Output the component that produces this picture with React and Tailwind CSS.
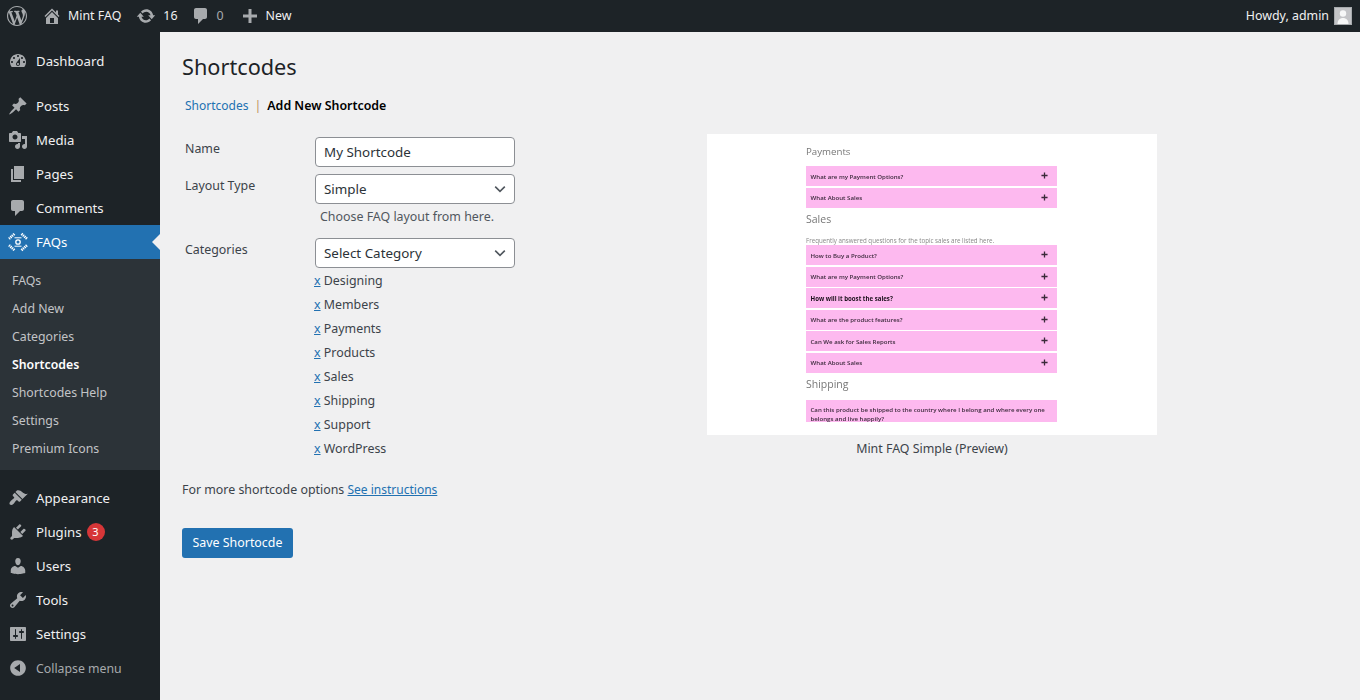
import React from 'react';

const font = { fontFamily: '"Noto Sans", sans-serif' };

const icons = {
  wp: 'M20 10c0-5.51-4.49-10-10-10C4.48 0 0 4.49 0 10c0 5.52 4.48 10 10 10 5.51 0 10-4.48 10-10zM7.78 15.37L4.37 6.22c.55-.02 1.17-.08 1.17-.08.5-.06.44-1.13-.06-1.11 0 0-1.45.11-2.37.11-.18 0-.37 0-.58-.01C4.12 2.69 6.87 1.11 10 1.11c2.33 0 4.45.87 6.05 2.34-.68-.11-1.65.39-1.65 1.58 0 .74.45 1.36.9 2.1.35.61.55 1.36.55 2.46 0 1.49-1.4 5-1.4 5l-3.03-8.37c.54-.02.82-.17.82-.17.5-.05.44-1.25-.06-1.22 0 0-1.44.12-2.38.12-.87 0-2.33-.12-2.33-.12-.5-.03-.56 1.2-.06 1.22l.92.08 1.26 3.41zM17.41 10c.24-.64.74-1.87.43-4.25.7 1.29 1.05 2.71 1.05 4.25 0 3.29-1.73 6.24-4.4 7.78.97-2.59 1.94-5.2 2.92-7.78zM6.1 18.09C3.12 16.65 1.11 13.53 1.11 10c0-1.3.23-2.48.72-3.59C3.25 10.3 4.67 14.2 6.1 18.09zm4.03-6.63l2.58 6.98c-.86.29-1.76.45-2.71.45-.79 0-1.57-.11-2.29-.33.81-2.38 1.62-4.74 2.42-7.1z',
  home: 'M16 8.5l1.53 1.53-1.06 1.06L10 4.62l-6.47 6.47-1.06-1.06L10 2.5l4 4v-2h2v4zm-6-2.46l6 5.99V18H4v-5.97zM12 17v-5H8v5h4z',
  update: 'M10.2 3.28c3.53 0 6.43 2.61 6.92 6h2.08l-3.5 4-3.5-4h2.32c-.45-1.97-2.21-3.45-4.32-3.45-1.45 0-2.73.71-3.54 1.78L4.95 5.66C6.23 4.2 8.11 3.28 10.2 3.28zm-.4 13.44c-3.52 0-6.43-2.61-6.92-6H.8l3.5-4c1.17 1.33 2.33 2.67 3.5 4H5.48c.45 1.97 2.21 3.45 4.32 3.45 1.45 0 2.73-.71 3.54-1.78l1.71 1.95c-1.28 1.46-3.15 2.38-5.25 2.38z',
  comment: 'M5 2h9c1.1 0 2 .9 2 2v7c0 1.1-.9 2-2 2h-2l-5 5v-5H5c-1.1 0-2-.9-2-2V4c0-1.1.9-2 2-2z',
  plus: 'M17 8.5v3h-5.5V17h-3v-5.5H3v-3h5.5V3h3v5.5H17z',
  dashboard: 'M3.76 16h12.48c1.1-1.37 1.76-3.11 1.76-5 0-4.42-3.58-8-8-8s-8 3.58-8 8c0 1.89.66 3.63 1.76 5zM10 4c.55 0 1 .45 1 1s-.45 1-1 1-1-.45-1-1 .45-1 1-1zM6 6c.55 0 1 .45 1 1s-.45 1-1 1-1-.45-1-1 .45-1 1-1zm8 0c.55 0 1 .45 1 1s-.45 1-1 1-1-.45-1-1 .45-1 1-1zm-5.37 5.55L12 7v6c0 1.1-.9 2-2 2s-2-.9-2-2c0-.57.24-1.08.63-1.45zM4 10c.55 0 1 .45 1 1s-.45 1-1 1-1-.45-1-1 .45-1 1-1zm12 0c.55 0 1 .45 1 1s-.45 1-1 1-1-.45-1-1 .45-1 1-1zm-5 3c0-.55-.45-1-1-1s-1 .45-1 1 .45 1 1 1 1-.45 1-1z',
  post: 'M10.44 3.02l1.82-1.82 6.36 6.35-1.83 1.82c-1.05-.68-2.48-.57-3.41.36l-.75.75c-.92.93-1.04 2.35-.35 3.41l-1.83 1.82-2.41-2.41-2.8 2.79c-.42.42-3.38 2.71-3.8 2.29s1.86-3.39 2.28-3.81l2.79-2.79L4.1 9.36l1.83-1.82c1.05.69 2.48.57 3.4-.36l.75-.75c.93-.92 1.05-2.35.36-3.41z',
  media: 'M13 11V4c0-.55-.45-1-1-1h-1.67L9 1H5L3.67 3H2c-.55 0-1 .45-1 1v7c0 .55.45 1 1 1h10c.55 0 1-.45 1-1zM7 4.5c1.38 0 2.5 1.12 2.5 2.5S8.38 9.5 7 9.5 4.5 8.38 4.5 7 5.62 4.5 7 4.5zM14 6h5v10.5c0 1.38-1.12 2.5-2.5 2.5S14 17.88 14 16.5s1.12-2.5 2.5-2.5c.17 0 .34.02.5.05V9h-3V6zm-4 8.05V13h2v3.5c0 1.38-1.12 2.5-2.5 2.5S7 17.88 7 16.5 8.12 14 9.5 14c.17 0 .34.02.5.05z',
  page: 'M6 15V2h10v13H6zm-1 1h8v2H3V5h2v11z',
  appearance: 'M14.48 11.06L7.41 3.99l1.5-1.5c.5-.56 2.3-.47 3.51.32 1.21.8 1.43 1.28 2.91 2.1 1.18.64 2.45 1.26 4.45.85zm-.71.71L6.7 4.7 4.93 6.47c-.39.39-.39 1.02 0 1.41l1.06 1.06c.39.39.39 1.03 0 1.42-.6.6-1.43 1.11-2.21 1.69-.35.26-.7.53-1.01.84-1.35 1.34-1.73 2.76-.82 3.67s2.33.53 3.67-.82c.31-.31.58-.66.84-1.01.58-.78 1.09-1.61 1.69-2.21.39-.39 1.03-.39 1.42 0l1.06 1.06c.39.39 1.02.39 1.41 0z',
  plugins: 'M13.11 4.36L9.87 7.6 8 5.73l3.24-3.24c.35-.34 1.05-.2 1.56.32.52.51.66 1.21.31 1.55zm-8 1.77l.91-1.12 9.01 9.01-1.19.84c-.71.71-2.63 1.16-3.82 1.16H6.14L4.9 17.26c-.59.59-1.54.59-2.12 0-.59-.58-.59-1.53 0-2.12l1.24-1.24v-3.88c0-1.13.4-3.19 1.09-3.89zm7.26 3.97l3.24-3.24c.34-.35 1.04-.21 1.55.31.52.51.66 1.21.31 1.55l-3.24 3.25z',
  users: 'M10 9.25c-2.27 0-2.73-3.44-2.73-3.44C7 4.02 7.82 2 9.97 2c2.16 0 2.98 2.02 2.71 3.81 0 0-.41 3.44-2.68 3.44zm0 2.57L12.72 10c2.39 0 4.52 2.33 4.52 4.53v2.49s-3.65 1.13-7.24 1.13c-3.65 0-7.24-1.13-7.24-1.13v-2.49c0-2.25 1.94-4.48 4.47-4.48z',
  tools: 'M16.68 9.77c-1.34 1.34-3.3 1.67-4.95.99l-5.41 6.52c-.99.99-2.59.99-3.58 0s-.99-2.59 0-3.57l6.52-5.42c-.68-1.65-.35-3.61.99-4.95 1.28-1.28 3.12-1.62 4.72-1.06l-2.89 2.89 2.82 2.82 2.86-2.87c.53 1.58.18 3.39-1.08 4.65zM3.81 16.21c.4.39 1.04.39 1.43 0 .4-.4.4-1.04 0-1.43-.39-.4-1.03-.4-1.43 0-.39.39-.39 1.03 0 1.43z',
  settings: 'M18 16V4c0-.55-.45-1-1-1H3c-.55 0-1 .45-1 1v12c0 .55.45 1 1 1h14c.55 0 1-.45 1-1zM8 11h1c.55 0 1 .45 1 1s-.45 1-1 1H8v1.5c0 .28-.22.5-.5.5s-.5-.22-.5-.5V13H6c-.55 0-1-.45-1-1s.45-1 1-1h1V5.5c0-.28.22-.5.5-.5s.5.22.5.5V11zm5-2h-1c-.55 0-1-.45-1-1s.45-1 1-1h1V5.5c0-.28.22-.5.5-.5s.5.22.5.5V7h1c.55 0 1 .45 1 1s-.45 1-1 1h-1v5.5c0 .28-.22.5-.5.5s-.5-.22-.5-.5V9z',
  collapse: 'M10 2.16c4.33 0 7.84 3.51 7.84 7.84s-3.51 7.84-7.84 7.84S2.16 14.33 2.16 10 5.71 2.16 10 2.16zm2 11.72V6.12L6.18 9.97z',
};

function Dash({ name, className }) {
  return (
    <svg viewBox="0 0 20 20" fill="currentColor" className={className}>
      <path d={icons[name]} />
    </svg>
  );
}

function FaqIcon() {
  return (
    <svg viewBox="0 0 20 20" fill="none" stroke="#fff" className="w-5 h-5">
      <circle cx="10" cy="10" r="2.2" strokeWidth="1.3" />
      <path d="M6.5 5.8h7M6.5 14.2h7" strokeWidth="1" />
      <path d="M1 6.8L6.5 1.8M13.5 1.8L19 6.8M1 13.2l5.5 5M13.5 18.2l5.5-5" strokeWidth="2.6" strokeDasharray="1.3 .7" />
    </svg>
  );
}

const topMenu = [
  { icon: 'post', label: 'Posts' },
  { icon: 'media', label: 'Media' },
  { icon: 'page', label: 'Pages' },
  { icon: 'comment', label: 'Comments' },
];

const bottomMenu = [
  { icon: 'appearance', label: 'Appearance' },
  { icon: 'plugins', label: 'Plugins', badge: 3 },
  { icon: 'users', label: 'Users' },
  { icon: 'tools', label: 'Tools' },
  { icon: 'settings', label: 'Settings' },
];

const submenu = ['FAQs', 'Add New', 'Categories', 'Shortcodes', 'Shortcodes Help', 'Settings', 'Premium Icons'];
const categories = ['Designing', 'Members', 'Payments', 'Products', 'Sales', 'Shipping', 'Support', 'WordPress'];

function MenuItem({ icon, label, badge }) {
  return (
    <div className="h-[34px] flex items-center text-[13.2px] text-[#f0f0f1]">
      <span className="w-9 flex justify-center text-[#a7aaad]">
        <Dash name={icon} className="w-5 h-5" />
      </span>
      <span className="pt-[2px]">{label}</span>
      {badge && (
        <span className="ml-[5px] w-[18px] h-[18px] rounded-full bg-[#d63638] text-white text-[11px] flex items-center justify-center">
          {badge}
        </span>
      )}
    </div>
  );
}

function Sidebar() {
  return (
    <div className="w-40 shrink-0 bg-[#1d2327] pt-3">
      <MenuItem icon="dashboard" label="Dashboard" />
      <div className="h-[11px]" />
      {topMenu.map((m) => (
        <MenuItem key={m.label} {...m} />
      ))}
      <div className="relative h-[34px] flex items-center text-[13.2px] text-white bg-[#2271b1]">
        <span className="w-9 flex justify-center">
          <FaqIcon />
        </span>
        <span className="pt-[2px]">FAQs</span>
        <span className="absolute right-0 top-[9px] border-[8px] border-transparent border-r-[#f0f0f1]" />
      </div>
      <div className="bg-[#2c3338] pt-2 pb-[7px]">
        {submenu.map((s) => (
          <div
            key={s}
            className={`h-7 pl-3 flex items-center text-[12.3px] ${s === 'Shortcodes' ? 'text-white font-semibold' : 'text-[#c3c4c7]'}`}
          >
            {s}
          </div>
        ))}
      </div>
      <div className="h-[11px]" />
      {bottomMenu.map((m) => (
        <MenuItem key={m.label} {...m} />
      ))}
      <div className="h-[34px] flex items-center text-[12.3px] text-[#a7aaad]">
        <span className="w-9 flex justify-center">
          <Dash name="collapse" className="w-5 h-5" />
        </span>
        <span className="pt-[2px]">Collapse menu</span>
      </div>
    </div>
  );
}

function AdminBar() {
  return (
    <div className="h-8 shrink-0 bg-[#1d2327] flex items-center text-[12.4px] text-[#f0f0f1]">
      <span className="w-[34px] flex justify-center text-[#a7aaad]">
        <Dash name="wp" className="w-5 h-5" />
      </span>
      <span className="ml-[8px] flex items-center text-[#a7aaad]">
        <Dash name="home" className="w-5 h-5" />
      </span>
      <span className="ml-[6px]">Mint FAQ</span>
      <Dash name="update" className="w-5 h-5 ml-[15px] text-[#a7aaad]" />
      <span className="ml-[7px]">16</span>
      <Dash name="comment" className="w-5 h-5 ml-[13px] text-[#a7aaad]" />
      <span className="ml-[6px] text-[#a7aaad]">0</span>
      <Dash name="plus" className="w-5 h-5 ml-4 text-[#a7aaad]" />
      <span className="ml-[6px]">New</span>
      <span className="ml-auto">Howdy, admin</span>
      <span className="ml-[5px] mr-2 w-[18px] h-[18px] bg-[#c3c4c7] border border-[#a7aaad] flex items-end justify-center overflow-hidden">
        <svg viewBox="0 0 16 16" fill="#f6f7f7" className="w-4 h-4">
          <circle cx="8" cy="5.5" r="3.2" />
          <path d="M2.5 16c0-4 2.5-6 5.5-6s5.5 2 5.5 6z" />
        </svg>
      </span>
    </div>
  );
}

function FaqRow({ children, bold }) {
  return (
    <div className="h-[20px] mb-[1.5px] bg-[#fdb9ef] flex items-center justify-between pl-[4.5px] pr-[9px] text-[6.1px] text-[#3c2a3c]">
      <span className={bold ? 'pt-px font-bold text-[#1a101a]' : 'pt-px font-semibold'}>{children}</span>
      <svg viewBox="0 0 8 8" className="w-[7px] h-[7px] -mt-px" stroke="#3a2a3a" strokeWidth="1.5">
        <path d="M4 .5v7M.5 4h7" />
      </svg>
    </div>
  );
}

// the preview is a scaled-down picture in the original, hence the tiny type
function Preview() {
  return (
    <div className="flex flex-col items-center">
      <div className="w-[450px] h-[301px] bg-white overflow-hidden pl-[99px] blur-[0.4px]" style={{ fontFamily: '"Open Sans", sans-serif' }}>
        <div className="w-[251px]">
          <div className="h-[32px] pt-[11px] text-[9.7px] leading-[14px] text-[#777]">Payments</div>
          <FaqRow>What are my Payment Options?</FaqRow>
          <FaqRow>What About Sales</FaqRow>
          <div className="h-[17px] text-[10.5px] leading-[20px] text-[#777]">Sales</div>
          <div className="h-[19px] pt-[10px] text-[6.2px] leading-[10px] text-[#888] whitespace-nowrap">Frequently answered questions for the topic sales are listed here.</div>
          <FaqRow>How to Buy a Product?</FaqRow>
          <FaqRow>What are my Payment Options?</FaqRow>
          <FaqRow bold>How will it boost the sales?</FaqRow>
          <FaqRow>What are the product features?</FaqRow>
          <FaqRow>Can We ask for Sales Reports</FaqRow>
          <FaqRow>What About Sales</FaqRow>
          <div className="h-[26px] text-[10.5px] leading-[20px] text-[#777]">Shipping</div>
          <div className="h-[22px] bg-[#fdb9ef] pl-[4.5px] pr-[8px] pt-[6px] text-[6.1px] leading-[8.5px] font-semibold text-[#3c2a3c] overflow-hidden">
            Can this product be shipped to the country where I belong and where every one belongs and live happily?
          </div>
        </div>
      </div>
      <div className="mt-[5px] text-[12.4px] leading-[18px] text-[#3c434a]">Mint FAQ Simple (Preview)</div>
    </div>
  );
}

function Field({ children }) {
  return (
    <div className="w-[200px] h-[30px] bg-white border border-[#8c8f94] rounded-[4px] px-2 flex items-center justify-between text-[13.4px] text-[#2c3338]">
      {children}
    </div>
  );
}

function Chevron() {
  return (
    <svg viewBox="0 0 20 20" fill="none" stroke="#50575e" strokeWidth="2" className="w-4 h-4 -mr-[2px]">
      <path d="M4 7l6 6 6-6" />
    </svg>
  );
}

function Form() {
  return (
    <div className="w-[525px] shrink-0 text-[12.4px] text-[#3c434a]">
      <div className="flex">
        <div className="w-[133px] pl-[3px] pt-[3px] leading-[18px]">Name</div>
        <Field>My Shortcode</Field>
      </div>
      <div className="flex mt-[7px]">
        <div className="w-[133px] pl-[3px] pt-[3px] leading-[18px]">Layout Type</div>
        <div>
          <Field>Simple<Chevron /></Field>
          <div className="pl-[5px] mt-[4px] leading-[18px] text-[#50575e]">Choose FAQ layout from here.</div>
        </div>
      </div>
      <div className="flex mt-[12px]">
        <div className="w-[133px] pl-[3px] pt-[3px] leading-[18px]">Categories</div>
        <div>
          <Field>Select Category<Chevron /></Field>
          <div className="mt-px">
            {categories.map((c) => (
              <div key={c} className="h-6 leading-6 -ml-px">
                <span className="text-[#2271b1] underline">x</span> {c}
              </div>
            ))}
          </div>
        </div>
      </div>
      <div className="mt-[20px] leading-[18px]">
        For more shortcode options <span className="text-[12px] text-[#2271b1] underline">See instructions</span>
      </div>
      <button className="block mt-[29px] h-[30px] w-[111px] bg-[#2271b1] rounded-[3px] text-white text-[12.4px]">Save Shortocde</button>
    </div>
  );
}

export default function App() {
  return (
    <div className="h-screen overflow-hidden flex flex-col bg-[#f0f0f1]" style={font}>
      <AdminBar />
      <div className="flex flex-1 min-h-0">
        <Sidebar />
        <div className="flex-1 pl-[22px] pt-[20px]">
          <h1 className="text-[21.7px] leading-[30px] text-[#1d2327]">Shortcodes</h1>
          <div className="mt-[15px] pl-[3px] text-[12.4px] leading-[18px] flex items-center">
            <span className="text-[12px] text-[#2271b1]">Shortcodes</span>
            <span className="mx-[6px] text-[#c0915a]">|</span>
            <span className="font-semibold text-[#000]">Add New Shortcode</span>
          </div>
          <div className="flex items-start mt-[19px]">
            <div className="pt-[3px]">
              <Form />
            </div>
            <Preview />
          </div>
        </div>
      </div>
    </div>
  );
}
